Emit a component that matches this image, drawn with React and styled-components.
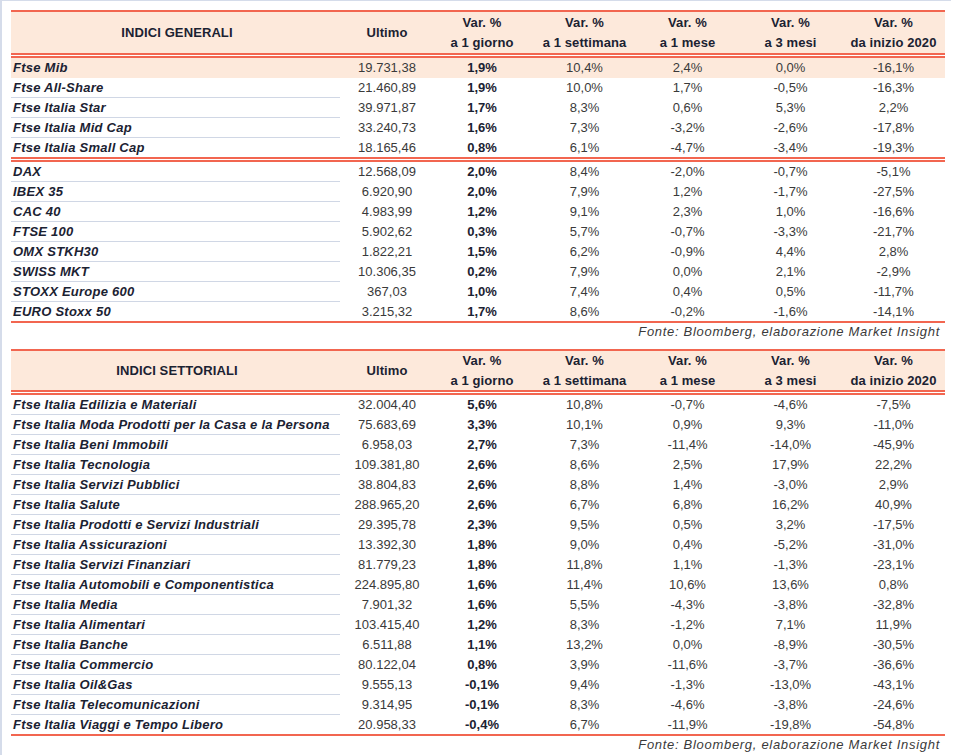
import React from "react";
import styled, { createGlobalStyle } from "styled-components";

const RED = "#f26650";
const PEACH = "#fde9db";
const GRID = "#d0d7e5";
const INK = "#1b2232";
const NUM = "#3a3a3a";

const GlobalStyle = createGlobalStyle`
  html, body { margin: 0; padding: 0; background: #ffffff; }
  body {
    font-family: "Liberation Sans", Arial, sans-serif;
    font-size: 13px;
    color: ${INK};
  }
`;

const Page = styled.div`
  width: 951px;
  height: 755px;
  border-top: 1px solid #d5dcea;
  border-left: 2px solid #d5dcea;
  padding: 9px 0 0 9px;
  box-sizing: border-box;
  overflow: hidden;
`;

const Block = styled.section`
  width: 934px;
  margin-bottom: ${(p) => p.$gap || 0}px;
`;

const Sheet = styled.div`
  border-top: 2px solid ${RED};
  border-bottom: 2px solid ${RED};
`;

const COLS = "332px 88px 102px 103px 103px 103px 103px";

const HeadRow = styled.div`
  display: grid;
  grid-template-columns: ${COLS};
  height: ${(p) => p.$h}px;
  background: ${PEACH};
  font-weight: 700;
  color: ${INK};
`;

const HeadCell = styled.div`
  display: flex;
  flex-direction: column;
  align-items: center;
  justify-content: center;
  line-height: 20px;
  white-space: nowrap;
  letter-spacing: 0.1px;
`;

const DoubleRule = styled.div`
  height: 1px;
  border-top: 2px solid ${RED};
  border-bottom: 2px solid ${RED};
`;

const Row = styled.div`
  display: grid;
  grid-template-columns: ${COLS};
  height: ${(p) => (p.$last ? 19 : 20)}px;
  background: ${(p) => (p.$hl ? PEACH : "transparent")};
`;

const NameCell = styled.div`
  box-sizing: border-box;
  margin-right: 3px;
  padding-left: 2px;
  height: 100%;
  line-height: 19px;
  font-weight: 700;
  font-style: italic;
  letter-spacing: 0.25px;
  color: ${INK};
  white-space: nowrap;
  border-bottom: 1px solid ${(p) => (p.$line ? GRID : "transparent")};
`;

const NumCell = styled.div`
  text-align: center;
  line-height: 19px;
  white-space: nowrap;
  color: ${(p) => (p.$bold ? INK : NUM)};
  font-weight: ${(p) => (p.$bold ? 700 : 400)};
`;

const Source = styled.div`
  text-align: right;
  padding-right: 5px;
  font-style: italic;
  letter-spacing: 0.7px;
  color: ${NUM};
  line-height: 17px;
  height: 17px;
  white-space: nowrap;
`;

const headers = [
  ["Var. %", "a 1 giorno"],
  ["Var. %", "a 1 settimana"],
  ["Var. %", "a 1 mese"],
  ["Var. %", "a 3 mesi"],
  ["Var. %", "da inizio 2020"],
];

const general = [
  [
    ["Ftse Mib", "19.731,38", "1,9%", "10,4%", "2,4%", "0,0%", "-16,1%", true],
    ["Ftse All-Share", "21.460,89", "1,9%", "10,0%", "1,7%", "-0,5%", "-16,3%"],
    ["Ftse Italia Star", "39.971,87", "1,7%", "8,3%", "0,6%", "5,3%", "2,2%"],
    ["Ftse Italia Mid Cap", "33.240,73", "1,6%", "7,3%", "-3,2%", "-2,6%", "-17,8%"],
    ["Ftse Italia Small Cap", "18.165,46", "0,8%", "6,1%", "-4,7%", "-3,4%", "-19,3%"],
  ],
  [
    ["DAX", "12.568,09", "2,0%", "8,4%", "-2,0%", "-0,7%", "-5,1%"],
    ["IBEX 35", "6.920,90", "2,0%", "7,9%", "1,2%", "-1,7%", "-27,5%"],
    ["CAC 40", "4.983,99", "1,2%", "9,1%", "2,3%", "1,0%", "-16,6%"],
    ["FTSE 100", "5.902,62", "0,3%", "5,7%", "-0,7%", "-3,3%", "-21,7%"],
    ["OMX STKH30", "1.822,21", "1,5%", "6,2%", "-0,9%", "4,4%", "2,8%"],
    ["SWISS MKT", "10.306,35", "0,2%", "7,9%", "0,0%", "2,1%", "-2,9%"],
    ["STOXX Europe 600", "367,03", "1,0%", "7,4%", "0,4%", "0,5%", "-11,7%"],
    ["EURO Stoxx 50", "3.215,32", "1,7%", "8,6%", "-0,2%", "-1,6%", "-14,1%"],
  ],
];

const sectors = [
  [
    ["Ftse Italia Edilizia e Materiali", "32.004,40", "5,6%", "10,8%", "-0,7%", "-4,6%", "-7,5%"],
    ["Ftse Italia Moda Prodotti per la Casa e la Persona", "75.683,69", "3,3%", "10,1%", "0,9%", "9,3%", "-11,0%"],
    ["Ftse Italia Beni Immobili", "6.958,03", "2,7%", "7,3%", "-11,4%", "-14,0%", "-45,9%"],
    ["Ftse Italia Tecnologia", "109.381,80", "2,6%", "8,6%", "2,5%", "17,9%", "22,2%"],
    ["Ftse Italia Servizi Pubblici", "38.804,83", "2,6%", "8,8%", "1,4%", "-3,0%", "2,9%"],
    ["Ftse Italia Salute", "288.965,20", "2,6%", "6,7%", "6,8%", "16,2%", "40,9%"],
    ["Ftse Italia Prodotti e Servizi Industriali", "29.395,78", "2,3%", "9,5%", "0,5%", "3,2%", "-17,5%"],
    ["Ftse Italia Assicurazioni", "13.392,30", "1,8%", "9,0%", "0,4%", "-5,2%", "-31,0%"],
    ["Ftse Italia Servizi Finanziari", "81.779,23", "1,8%", "11,8%", "1,1%", "-1,3%", "-23,1%"],
    ["Ftse Italia Automobili e Componentistica", "224.895,80", "1,6%", "11,4%", "10,6%", "13,6%", "0,8%"],
    ["Ftse Italia Media", "7.901,32", "1,6%", "5,5%", "-4,3%", "-3,8%", "-32,8%"],
    ["Ftse Italia Alimentari", "103.415,40", "1,2%", "8,3%", "-1,2%", "7,1%", "11,9%"],
    ["Ftse Italia Banche", "6.511,88", "1,1%", "13,2%", "0,0%", "-8,9%", "-30,5%"],
    ["Ftse Italia Commercio", "80.122,04", "0,8%", "3,9%", "-11,6%", "-3,7%", "-36,6%"],
    ["Ftse Italia Oil&Gas", "9.555,13", "-0,1%", "9,4%", "-1,3%", "-13,0%", "-43,1%"],
    ["Ftse Italia Telecomunicazioni", "9.314,95", "-0,1%", "8,3%", "-4,6%", "-3,8%", "-24,6%"],
    ["Ftse Italia Viaggi e Tempo Libero", "20.958,33", "-0,4%", "6,7%", "-11,9%", "-19,8%", "-54,8%"],
  ],
];

function Table({ title, groups, gap, headH }) {
  return (
    <Block $gap={gap}>
      <Sheet>
        <HeadRow $h={headH}>
          <HeadCell>{title}</HeadCell>
          <HeadCell>Ultimo</HeadCell>
          {headers.map(([a, b]) => (
            <HeadCell key={b}>
              <span>{a}</span>
              <span>{b}</span>
            </HeadCell>
          ))}
        </HeadRow>
        {groups.map((rows, gi) => (
          <React.Fragment key={gi}>
            <DoubleRule />
            {rows.map((r, i) => {
              const last = i === rows.length - 1;
              return (
                <Row key={r[0]} $hl={r[7]} $last={last}>
                  <NameCell $line={!r[7] && !last}>{r[0]}</NameCell>
                  <NumCell>{r[1]}</NumCell>
                  <NumCell $bold>{r[2]}</NumCell>
                  <NumCell>{r[3]}</NumCell>
                  <NumCell>{r[4]}</NumCell>
                  <NumCell>{r[5]}</NumCell>
                  <NumCell>{r[6]}</NumCell>
                </Row>
              );
            })}
          </React.Fragment>
        ))}
      </Sheet>
      <Source>Fonte: Bloomberg, elaborazione Market Insight</Source>
    </Block>
  );
}

export default function App() {
  return (
    <>
      <GlobalStyle />
      <Page>
        <Table title="INDICI GENERALI" groups={general} gap={9} headH={41} />
        <Table title="INDICI SETTORIALI" groups={sectors} headH={39} />
      </Page>
    </>
  );
}
